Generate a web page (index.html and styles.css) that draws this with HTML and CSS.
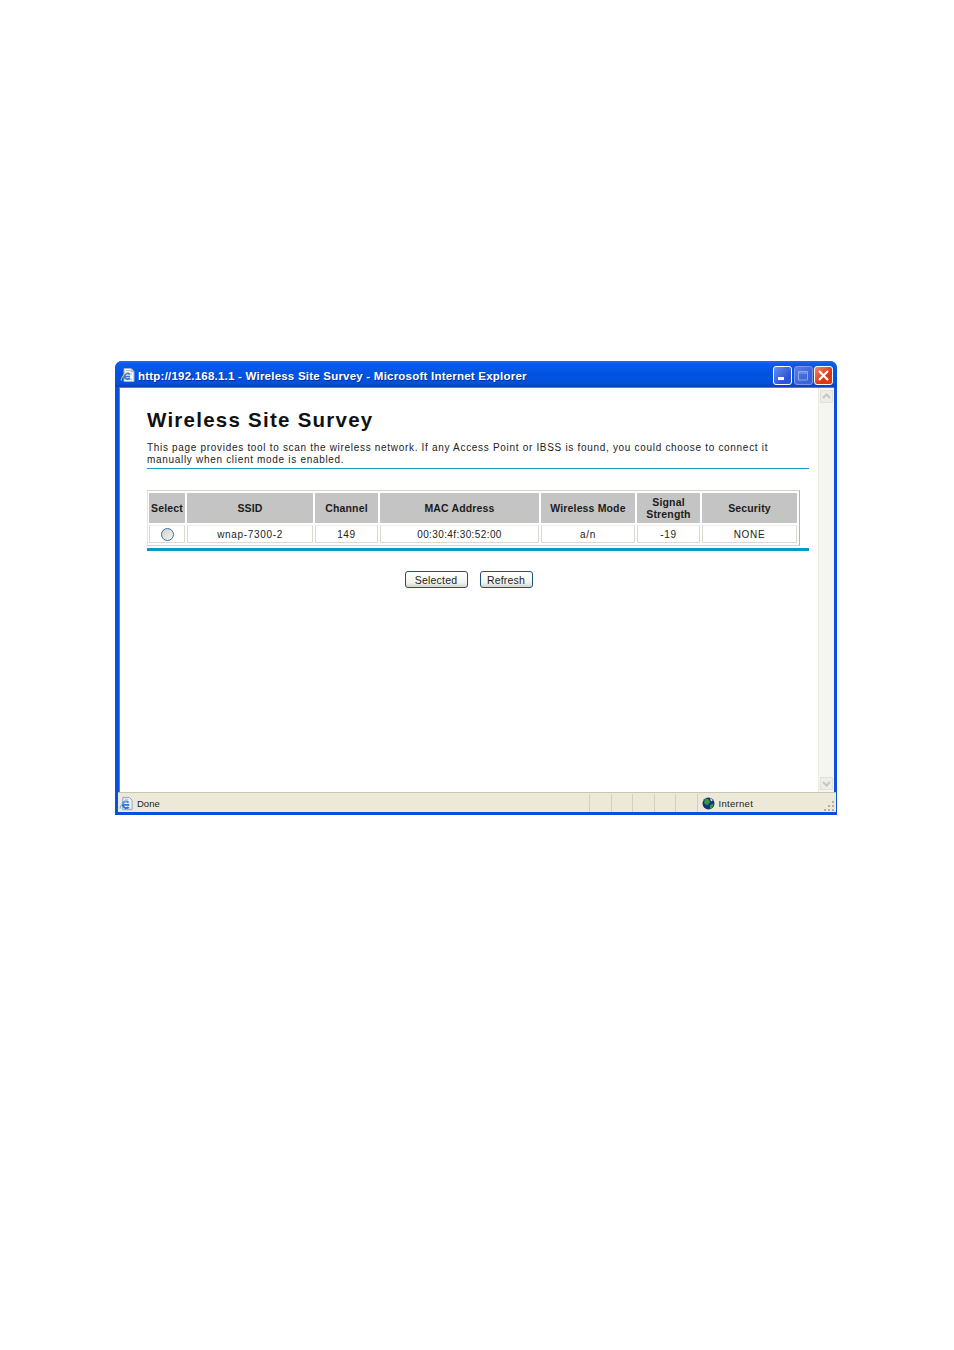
FILE: index.html
```html
<!DOCTYPE html>
<html lang="en">
<head>
<meta charset="utf-8">
<title>Wireless Site Survey</title>
<link rel="stylesheet" href="styles.css">
</head>
<body>
<div class="window">
  <div class="titlebar">
    <svg class="title-icon" viewBox="0 0 16 16" width="16" height="16"><path d="M4 1.500h7l3 3v10H4z" fill="#f2f4f8" stroke="#9fb0c8"/><path d="M11 1.500v3h3" fill="#cfd8e6" stroke="#9fb0c8"/><path d="M6 3.500h4M9 7h3M9 12.500h3" stroke="#aebcd2"/><path d="M10 9.500H4.500a3 3 0 0 1 5.200-2M4.500 9.500a3 3 0 0 0 5.200 1.600" fill="none" stroke="#2a78d8" stroke-width="1.700"/><path d="M1 13.500C2 9 5 6 9 5" fill="none" stroke="#e6b45a" stroke-width="1.200"/></svg>
    <span class="title-text">http://192.168.1.1 - Wireless Site Survey - Microsoft Internet Explorer</span>
    <div class="controls">
      <span class="ctl ctl-min"><svg viewBox="0 0 19 19" width="19" height="19"><rect x="5" y="11" width="6" height="3" fill="#fff"/></svg></span>
      <span class="ctl ctl-max"><svg viewBox="0 0 19 19" width="19" height="19"><path d="M4.500 5.500h9v8.500h-9z M4.500 7h9" fill="none" stroke="#8ea6ea"/></svg></span>
      <span class="ctl ctl-close"><svg viewBox="0 0 19 19" width="19" height="19"><path d="M5 5l9 9M14 5l-9 9" stroke="#fff" stroke-width="2.200"/></svg></span>
    </div>
  </div>
  <div class="client">
    <main class="page">
      <h1 class="heading">Wireless Site Survey</h1>
      <p class="intro">This page provides tool to scan the wireless network. If any Access Point or IBSS is found, you could choose to connect it<br>manually when client mode is enabled.</p>
      <hr class="rule-thin">
      <table class="survey">
        <colgroup>
          <col class="c-select"><col class="c-ssid"><col class="c-channel"><col class="c-mac"><col class="c-mode"><col class="c-signal"><col class="c-security">
        </colgroup>
        <thead>
          <tr><th>Select</th><th>SSID</th><th>Channel</th><th>MAC Address</th><th>Wireless Mode</th><th>Signal Strength</th><th>Security</th></tr>
        </thead>
        <tbody>
          <tr>
            <td><span class="radio"></span></td>
            <td>wnap-7300-2</td><td>149</td><td class="mac">00:30:4f:30:52:00</td><td>a/n</td><td>-19</td><td>NONE</td>
          </tr>
        </tbody>
      </table>
      <hr class="rule-thick">
      <div class="actions">
        <button class="btn btn-selected" type="button">Selected</button>
        <button class="btn btn-refresh" type="button">Refresh</button>
      </div>
    </main>
    <div class="scrollbar">
      <span class="sb-btn"><svg viewBox="0 0 13 13" width="13" height="13"><path d="M3 8l3.500-3.500L10 8" fill="none" stroke="#c4c8c0" stroke-width="2"/></svg></span>
      <span class="sb-btn"><svg viewBox="0 0 13 13" width="13" height="13"><path d="M3 5l3.500 3.500L10 5" fill="none" stroke="#c4c8c0" stroke-width="2"/></svg></span>
    </div>
  </div>
  <div class="statusbar">
    <svg class="st-icon" viewBox="0 0 16 16" width="15" height="15"><path d="M4 1.500h7l3 3v10H4z" fill="#eef1f6" stroke="#8fa0bc"/><path d="M6 3.500h4M9 13h3" stroke="#aebcd2"/><path d="M11 9.500H4a3.500 3.500 0 0 1 6.200-2.400M4 9.500a3.500 3.500 0 0 0 6.200 2" fill="none" stroke="#2a78d8" stroke-width="2"/><path d="M1 13.500C2 9 5 6 9 5" fill="none" stroke="#7fb0e0" stroke-width="1.200"/></svg>
    <span class="st-done">Done</span>
    <span class="st-cell"></span><span class="st-cell"></span><span class="st-cell"></span><span class="st-cell"></span><span class="st-cell"></span>
    <span class="st-zone">
      <svg viewBox="0 0 13 13" width="13" height="13"><circle cx="6.500" cy="6.500" r="6" fill="#14327f"/><path d="M3 1.500l4 1 1 3-3 3-3-2.500zM8 8l3.500-1.500-1 4-2.500 1.500z" fill="#2f9d3a"/><path d="M8 1l3 2-2 1.500z" fill="#d6ebd0"/></svg>
      <span>Internet</span>
    </span>
    <svg class="grip" viewBox="0 0 12 12" width="12" height="12"><path d="M9 1h2v2H9zM5 5h2v2H5zM9 5h2v2H9zM1 9h2v2H1zM5 9h2v2H5zM9 9h2v2H9z" fill="#b4b0a0"/></svg>
  </div>
</div>
</body>
</html>
```
FILE: styles.css
```css
html, body { margin: 0; padding: 0; background: #fff; }
body { width: 954px; height: 1350px; overflow: hidden; font-family: "Liberation Sans", Arial, sans-serif; }

.window {
  box-sizing: border-box;
  width: 722px;
  height: 454px;
  margin: 361px 0 0 115px;
  display: flex;
  flex-direction: column;
  background: #0a4fe0;
  border-radius: 7px 7px 0 0;
  overflow: hidden;
}

.titlebar {
  height: 26px;
  flex: none;
  display: flex;
  align-items: center;
  padding: 2px 4px 0 5px;
  box-sizing: border-box;
  background: linear-gradient(#1f6cf0 0, #0a5ae6 12%, #0054e3 50%, #0350dc 85%, #0a3fb8 100%);
}
.title-icon { flex: none; }
.title-text {
  margin-left: 2px;
  padding-top: 2px;
  color: #fff;
  font-size: 11.500px;
  font-weight: bold;
  letter-spacing: 0.220px;
  white-space: nowrap;
  text-shadow: 1px 1px 0 #0a2e96;
  flex: 1;
}
.controls { display: flex; gap: 1.500px; flex: none; }
.ctl {
  width: 19px;
  height: 19px;
  box-sizing: border-box;
  border: 1px solid #fff;
  border-radius: 3px;
  display: block;
  overflow: hidden;
}
.ctl svg { display: block; margin: -1px; }
.ctl-min { background: linear-gradient(135deg, #6a8ff0, #2c55d8 70%); }
.ctl-max { background: linear-gradient(135deg, #5b7fe8, #3a62d8 70%); border-color: #7f97e0; }
.ctl-close { background: linear-gradient(135deg, #ec8a6c, #d63c14 60%); }

.client {
  flex: 1;
  min-height: 0;
  display: flex;
  margin: 0 3px 0 4px;
  background: #fff;
  border-top: 1px solid #807e74;
  border-left: 1px solid #807e74;
}
.page { flex: 1; padding: 0 9px 0 27px; min-width: 0; }

.heading {
  margin: 20px 0 0;
  font-size: 20.500px;
  line-height: 24px;
  font-weight: bold;
  letter-spacing: 1.250px;
  color: #111;
}
.intro {
  margin: 10px 0 0;
  font-size: 10px;
  line-height: 12px;
  letter-spacing: 0.690px;
  color: #222;
  white-space: nowrap;
}
.rule-thin { margin: 2px 0 0; height: 1px; border: 0; background: #1a9bc4; }

.survey {
  margin: 21px 0 0;
  width: 653px;
  table-layout: fixed;
  border-collapse: separate;
  border-spacing: 2px;
  border: 1px solid #d6d3c6;
  border-left: 0;
  border-right-color: #b8b5a8;
  box-shadow: inset 1px 0 0 #e8e6dc;
  box-sizing: border-box;
}
.c-select { width: 36px; }
.c-ssid { width: 126px; }
.c-channel { width: 63px; }
.c-mac { width: 159px; }
.c-mode { width: 94px; }
.c-signal { width: 63px; }
.c-security { width: 95px; }

.survey th {
  height: 30px;
  padding: 0;
  background: #c4c4c4;
  color: #1c1c1c;
  font-size: 10.500px;
  line-height: 12px;
  font-weight: bold;
  letter-spacing: 0.150px;
  text-align: center;
}
.survey td {
  height: 15px;
  padding: 1px 0 0;
  background: #fff;
  border: 1px solid #dcd9cc;
  border-top-color: #f0eee6;
  color: #222;
  font-size: 10px;
  line-height: 12px;
  letter-spacing: 0.670px;
  text-align: center;
}
.survey .mac { letter-spacing: 0.400px; }
.radio {
  display: block;
  width: 11px;
  height: 11px;
  margin: 0 auto;
  border: 1px solid #3f6c95;
  border-radius: 50%;
  background: linear-gradient(135deg, #d0d2cc, #f4f4f0);
}

.rule-thick { margin: 2px 0 0; height: 3px; border: 0; background: #0a97c9; }

.actions { display: flex; justify-content: center; gap: 12px; margin: 20px 0 0; padding-right: 19px; }
.btn {
  height: 17px;
  padding: 0;
  box-sizing: border-box;
  border: 1px solid #1c5180;
  border-radius: 3px;
  background: linear-gradient(#fff, #f4f4ee 70%, #d8d6c8);
  color: #222;
  font-family: "Liberation Sans", Arial, sans-serif;
  font-size: 10.500px;
  line-height: 14px;
  letter-spacing: 0.200px;
}
.btn-selected { width: 63px; }
.btn-refresh { width: 53px; }

.scrollbar {
  flex: none;
  width: 16px;
  box-sizing: border-box;
  padding: 2px 1px 2px 1px;
  background: #f6f6f0;
  border-left: 1px solid #ecebe2;
  display: flex;
  flex-direction: column;
  justify-content: space-between;
}
.sb-btn {
  display: block;
  width: 13px;
  height: 13px;
  background: #eeeee6;
  border: 1px solid #e2e1d6;
  box-sizing: border-box;
  overflow: hidden;
}
.sb-btn svg { display: block; margin: -1px; }

.statusbar {
  flex: none;
  height: 20px;
  margin: 0 1px 3px 3px;
  padding-top: 1px;
  box-sizing: border-box;
  border-top: 1px solid #c8c5b4;
  background: #ece9d8;
  display: flex;
  align-items: center;
  color: #222;
  font-size: 9.500px;
}
.st-icon { flex: none; margin-left: 1px; }
.st-done { width: 452px; margin-left: 3px; flex: none; }
.st-cell { width: 21.500px; height: 100%; box-sizing: border-box; border-left: 1px solid #d4d1c0; flex: none; }
.st-zone {
  display: flex;
  align-items: center;
  gap: 4px;
  height: 100%;
  box-sizing: border-box;
  flex: 1;
  padding-left: 4px;
  border-left: 1px solid #d4d1c0;
  letter-spacing: 0.300px;
}
.grip { flex: none; margin: 5px 1px 0 0; }
```
